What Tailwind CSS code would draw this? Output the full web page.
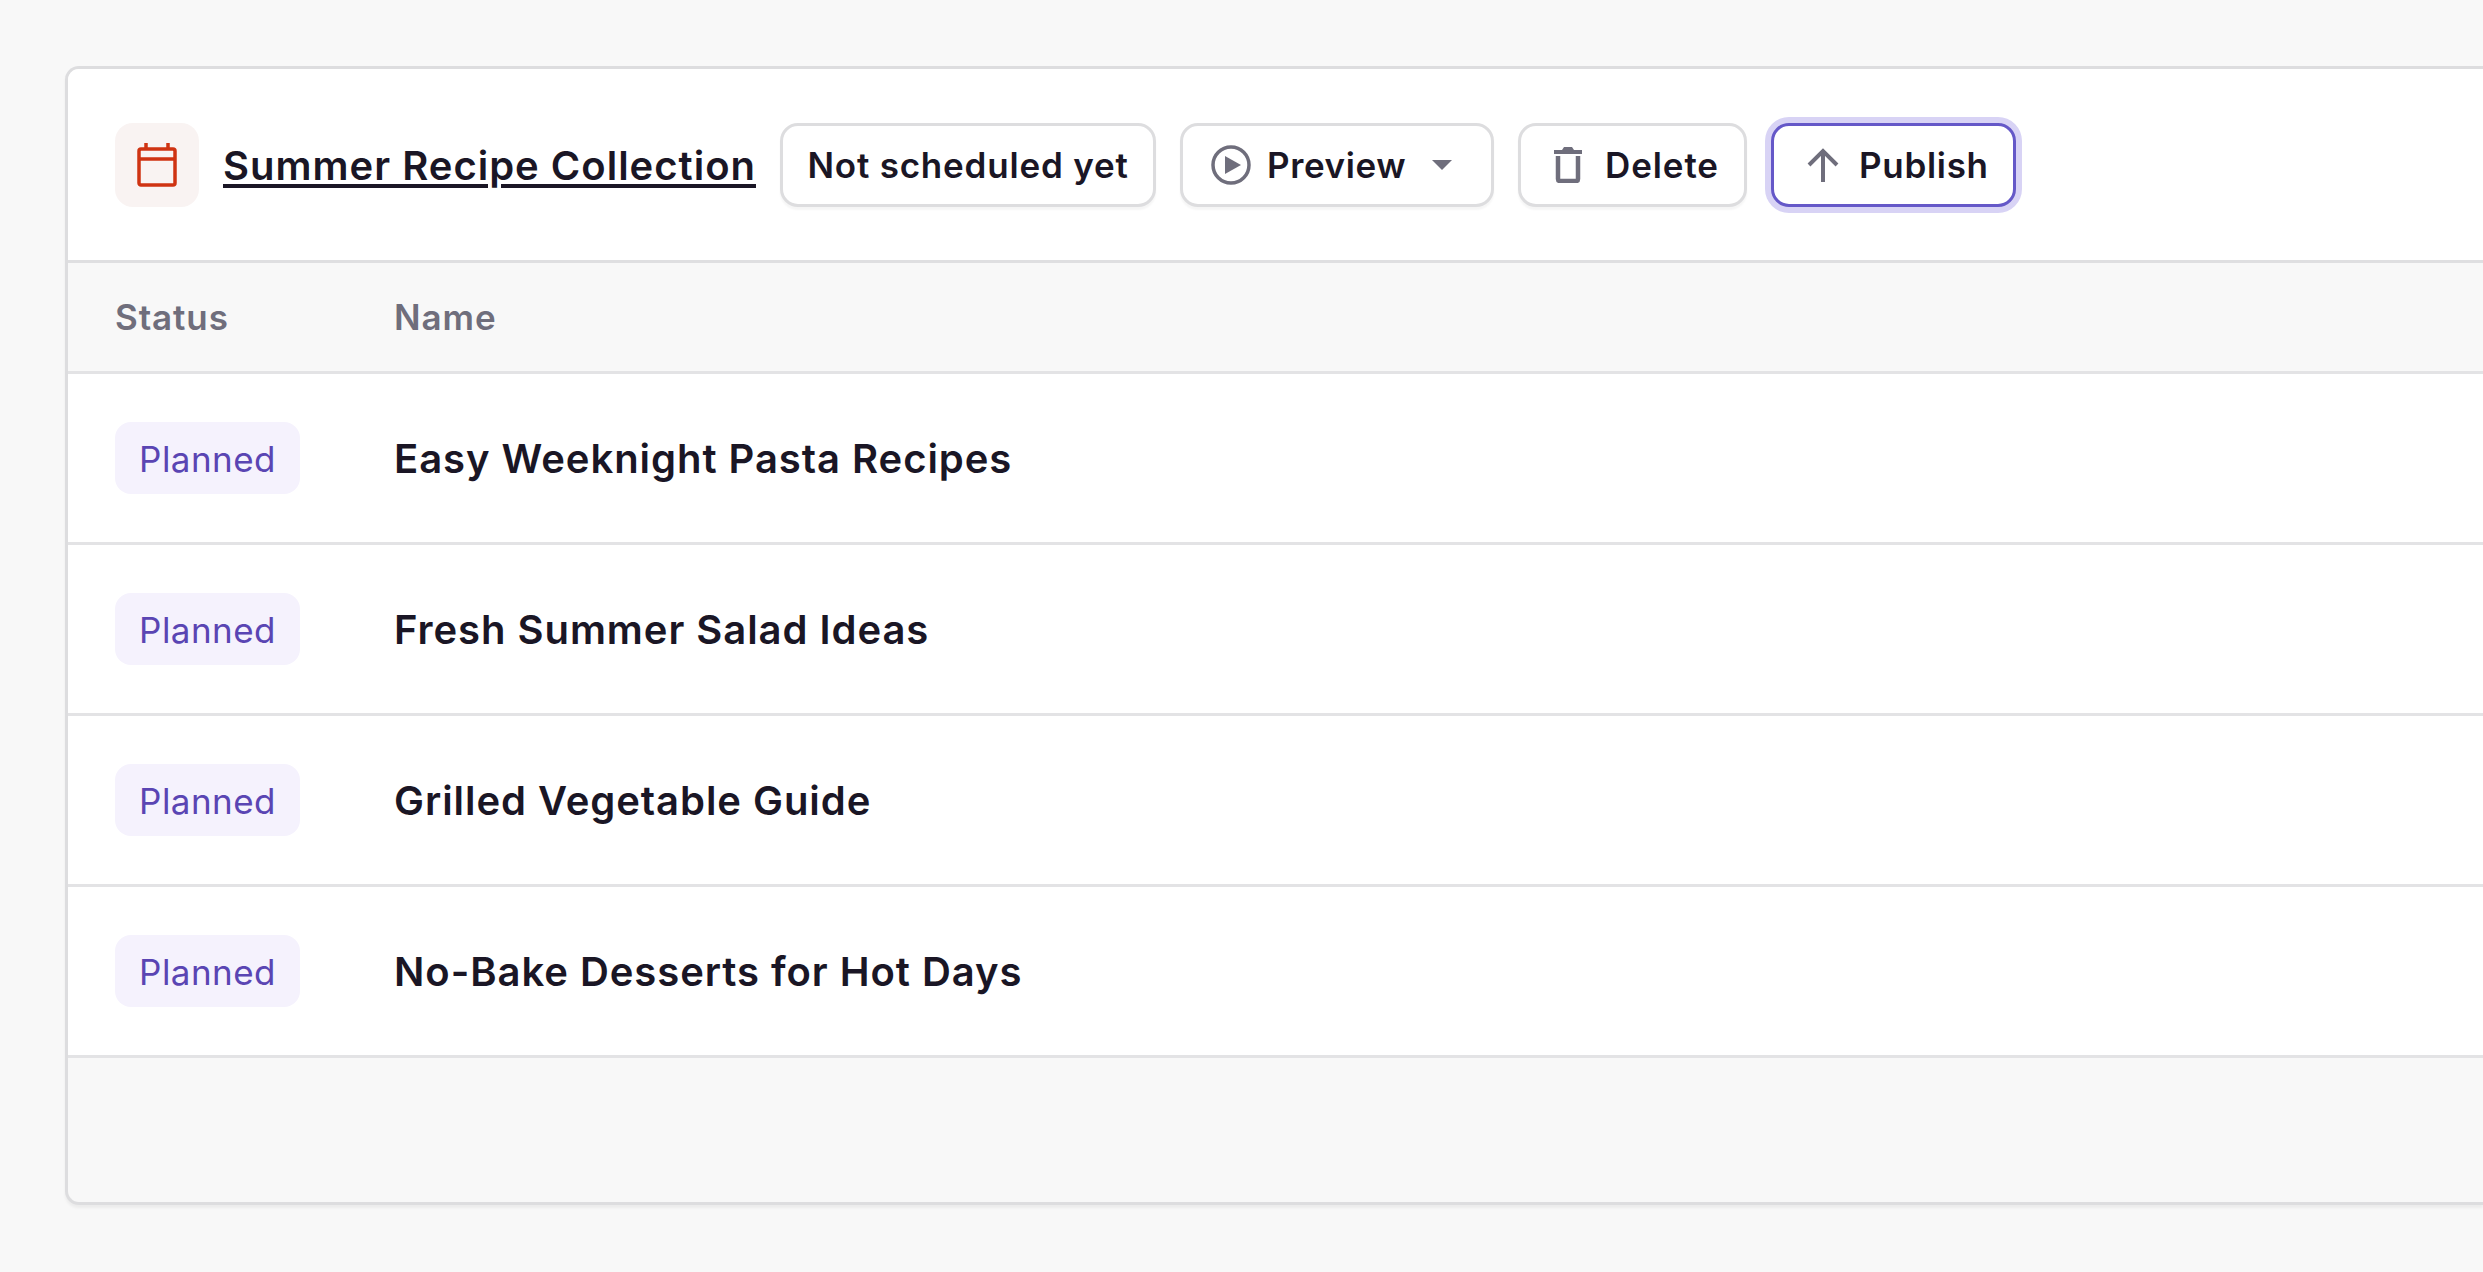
<!DOCTYPE html>
<html lang="en">
<head>
    <meta charset="UTF-8">
    <meta name="viewport" content="width=device-width, initial-scale=1.0">
    <script src="https://cdn.jsdelivr.net/npm/@tailwindcss/browser@4"></script>
    <title>Summer Recipe Collection</title>
</head>
<body class="bg-[#f8f8f8] h-[1272px] overflow-hidden font-['Inter',sans-serif] text-[#1a1625] pl-[65px] pt-[66px]">
    <div class="h-[1139px] bg-[#f8f8f8] border-[3px] border-r-0 border-[#dddddf] rounded-l-[14px] shadow-[0_3px_3px_rgba(0,0,0,0.05)] overflow-hidden">
        <!-- Header -->
        <div class="h-[194px] bg-white border-b-[3px] border-[#dfdfe1] flex items-center pl-[47px] gap-[24px]">
            <div class="flex items-center gap-[24px]">
                <div class="w-[84px] h-[84px] rounded-[18px] bg-[#f9f3f2] flex items-center justify-center">
                    <svg width="40" height="44" viewBox="0 0 40 44" fill="none" stroke="#cf3312" stroke-width="3.5">
                        <rect x="2" y="6" width="36" height="36" rx="2"/>
                        <path d="M2 16H38M9 0V6M31 0V6"/>
                    </svg>
                </div>
                <a href="#" class="pt-[2px] text-[40px] font-semibold tracking-[1px] underline underline-offset-[4px] decoration-[4px]">Summer Recipe Collection</a>
            </div>
            <button class="h-[84px] w-[376px] rounded-[18px] border-[3px] border-[#dddddf] bg-white shadow-[0_3px_2px_rgba(0,0,0,0.04)] text-[35px] font-semibold tracking-[0.8px]"><span class="block pt-[1px]">Not scheduled yet</span></button>
            <button class="h-[84px] w-[314px] pl-[28px] rounded-[18px] border-[3px] border-[#dddddf] bg-white shadow-[0_3px_2px_rgba(0,0,0,0.04)] text-[35px] font-semibold tracking-[0.6px] flex items-center">
                <svg width="40" height="40" viewBox="0 0 40 40" class="mr-[16px]" fill="none">
                    <circle cx="20" cy="20" r="18" stroke="#6f6e7c" stroke-width="3.5"/>
                    <path d="M14 11L30 20L14 29Z" fill="#6f6e7c"/>
                </svg>
                <span class="pt-[1px]">Preview</span>
                <svg width="20" height="10" viewBox="0 0 20 10" class="ml-[26px]"><path d="M0 0H20L10 10Z" fill="#6f6e7c"/></svg>
            </button>
            <button class="h-[84px] w-[229px] pl-[33px] rounded-[18px] border-[3px] border-[#dddddf] bg-white shadow-[0_3px_2px_rgba(0,0,0,0.04)] text-[35px] font-semibold tracking-[0.9px] flex items-center">
                <svg width="28" height="36" viewBox="0 0 28 36" class="mr-[23px]" fill="none">
                    <path d="M0 3H8L10 0H18L20 3H28V7H0Z" fill="#6f6e7c"/>
                    <path d="M4 9V32Q4 34 6 34H22Q24 34 24 32V9" stroke="#6f6e7c" stroke-width="4.5"/>
                </svg>
                <span class="pt-[1px]">Delete</span>
            </button>
            <button class="h-[84px] w-[245px] pl-[33px] rounded-[18px] border-[3px] border-[#6558c8] bg-white ring-[6px] ring-[#d8d3f5] text-[35px] font-semibold tracking-[0.7px] flex items-center">
                <svg width="32" height="34" viewBox="0 0 32 34" class="mr-[20px]" fill="none" stroke="#6f6e7c" stroke-width="4">
                    <path d="M16 34V3M2 17L16 3L30 17"/>
                </svg>
                <span class="pt-[1px]">Publish</span>
            </button>
        </div>
        <!-- Table head -->
        <div class="h-[111px] border-b-[3px] border-[#e3e3e5] flex items-center text-[35px] font-semibold tracking-[0.9px] text-[#6f6e7c]">
            <div class="w-[326px] pl-[47px] pt-[1px] shrink-0">Status</div>
            <div class="pt-[1px]">Name</div>
        </div>
        <!-- Rows -->
        <div class="h-[171px] bg-white border-b-[3px] border-[#e3e3e5] flex items-center">
            <div class="w-[326px] pl-[47px] shrink-0"><span class="inline-block h-[72px] leading-[74px] w-[185px] text-center rounded-[16px] bg-[#f5f2fd] text-[#5a45b3] text-[35px] tracking-[0.45px]">Planned</span></div>
            <div class="pt-[2px] text-[40px] font-semibold tracking-[0.95px]">Easy Weeknight Pasta Recipes</div>
        </div>
        <div class="h-[171px] bg-white border-b-[3px] border-[#e3e3e5] flex items-center">
            <div class="w-[326px] pl-[47px] shrink-0"><span class="inline-block h-[72px] leading-[74px] w-[185px] text-center rounded-[16px] bg-[#f5f2fd] text-[#5a45b3] text-[35px] tracking-[0.45px]">Planned</span></div>
            <div class="pt-[2px] text-[40px] font-semibold tracking-[0.95px]">Fresh Summer Salad Ideas</div>
        </div>
        <div class="h-[171px] bg-white border-b-[3px] border-[#e3e3e5] flex items-center">
            <div class="w-[326px] pl-[47px] shrink-0"><span class="inline-block h-[72px] leading-[74px] w-[185px] text-center rounded-[16px] bg-[#f5f2fd] text-[#5a45b3] text-[35px] tracking-[0.45px]">Planned</span></div>
            <div class="pt-[2px] text-[40px] font-semibold tracking-[0.95px]">Grilled Vegetable Guide</div>
        </div>
        <div class="h-[171px] bg-white border-b-[3px] border-[#e3e3e5] flex items-center">
            <div class="w-[326px] pl-[47px] shrink-0"><span class="inline-block h-[72px] leading-[74px] w-[185px] text-center rounded-[16px] bg-[#f5f2fd] text-[#5a45b3] text-[35px] tracking-[0.45px]">Planned</span></div>
            <div class="pt-[2px] text-[40px] font-semibold tracking-[0.95px]">No-Bake Desserts for Hot Days</div>
        </div>
    </div>
</body>
</html>
